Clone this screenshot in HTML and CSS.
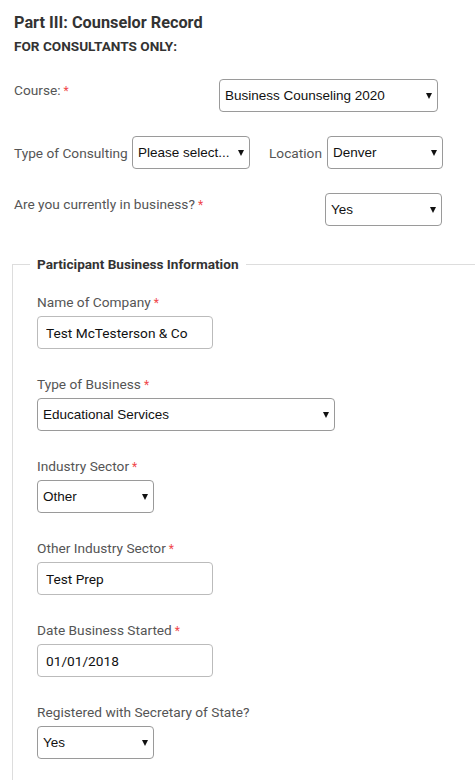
FILE: index.html
```html
<!DOCTYPE html>
<html>
<head>
<meta charset="utf-8">
<link rel="stylesheet" href="styles.css">
</head>
<body>
<div class="page">
  <h2 class="title">Part III: Counselor Record</h2>
  <div class="subtitle">FOR CONSULTANTS ONLY:</div>

  <div class="row row-top">
    <label class="lbl lbl-course">Course:<span class="req">*</span></label>
    <span class="sel sel-course"><select><option>Business Counseling 2020</option></select></span>
  </div>

  <div class="row row-mid">
    <label class="lbl lbl-type">Type of Consulting</label>
    <span class="sel sel-type"><select><option>Please select...</option></select></span>
    <label class="lbl lbl-loc">Location</label>
    <span class="sel sel-loc"><select><option>Denver</option></select></span>
  </div>

  <div class="row row-top">
    <label class="lbl lbl-biz">Are you currently in business?<span class="req">*</span></label>
    <span class="sel sel-biz"><select><option>Yes</option></select></span>
  </div>

  <fieldset class="box">
    <legend class="legend">Participant Business Information</legend>

    <div class="group">
      <label class="lbl">Name of Company<span class="req">*</span></label>
      <input class="inp" type="text" value="Test McTesterson &amp; Co">
    </div>

    <div class="group">
      <label class="lbl">Type of Business<span class="req">*</span></label>
      <span class="sel sel-wide"><select><option>Educational Services</option></select></span>
    </div>

    <div class="group">
      <label class="lbl">Industry Sector<span class="req">*</span></label>
      <span class="sel sel-small"><select><option>Other</option></select></span>
    </div>

    <div class="group">
      <label class="lbl">Other Industry Sector<span class="req">*</span></label>
      <input class="inp" type="text" value="Test Prep">
    </div>

    <div class="group">
      <label class="lbl">Date Business Started<span class="req">*</span></label>
      <input class="inp" type="text" value="01/01/2018">
    </div>

    <div class="group">
      <label class="lbl">Registered with Secretary of State?</label>
      <span class="sel sel-small"><select><option>Yes</option></select></span>
    </div>
  </fieldset>
</div>
</body>
</html>
```

FILE: styles.css
```css
html, body {
  margin: 0;
  padding: 0;
  background: #fff;
  overflow: hidden;
}

.page {
  padding: 12px 0 0 14px;
  font-family: Roboto, "Liberation Sans", sans-serif;
  color: #555;
}

.title {
  margin: 0;
  font-size: 16.3px;
  line-height: 22px;
  font-weight: 700;
  color: #333;
}

.subtitle {
  margin-top: 3px;
  font-size: 13.6px;
  line-height: 18px;
  font-weight: 700;
  color: #333;
}

.row {
  display: flex;
  margin-top: 24px;
}

.row-top {
  align-items: flex-start;
}

.row-mid {
  align-items: center;
}

.lbl {
  display: block;
  height: 18px;
  font-size: 13.7px;
  line-height: 18px;
  color: #555;
}

.row-top .lbl {
  padding-top: 2px;
}

.lbl-course {
  width: 205px;
}

.lbl-type {
  width: 114px;
}

.lbl-biz {
  width: 311px;
  padding-top: 3px;
}

.lbl-loc {
  margin-left: 19px;
  width: 53px;
}

.req {
  color: #f0474a;
  margin-left: 3px;
  font-size: 12px;
  line-height: 1;
}

.sel {
  position: relative;
  display: inline-block;
  height: 33px;
}

.sel select {
  -webkit-appearance: none;
  appearance: none;
  box-sizing: border-box;
  width: 100%;
  height: 33px;
  margin: 0;
  padding: 0 20px 0 5px;
  border: 1px solid #9a9a9a;
  border-radius: 4px;
  background: #fff;
  font-family: "Liberation Sans", Arial, sans-serif;
  font-size: 13.5px;
  color: #111;
}

.sel::after {
  content: "";
  position: absolute;
  right: 6px;
  top: 14px;
  border-left: 3.5px solid transparent;
  border-right: 3.5px solid transparent;
  border-top: 6px solid #111;
  pointer-events: none;
}

.sel-course { width: 219px; }
.sel-type { width: 118px; margin-left: 4px; }
.sel-loc { width: 116px; margin-left: 5px; }
.sel-biz { width: 117px; }
.sel-wide { width: 298px; }
.sel-small { width: 117px; }

.box {
  margin: 29px 0 0 -2px;
  padding: 20px 0 0 24px;
  border: 1px solid #ddd;
  border-right: none;
  border-bottom: none;
  min-height: 700px;
}

.legend {
  margin-left: -7px;
  padding: 0 7px;
  font-size: 13.6px;
  line-height: 18px;
  font-weight: 700;
  color: #333;
}

.group {
  display: flex;
  flex-direction: column;
  align-items: flex-start;
  margin-bottom: 26px;
}

.group .lbl {
  margin-bottom: 5px;
}

.inp {
  box-sizing: border-box;
  width: 176px;
  height: 33px;
  margin: 0;
  padding: 0 8px;
  border: 1px solid #bbb;
  border-radius: 4px;
  font-family: Roboto, "Liberation Sans", sans-serif;
  font-size: 13.7px;
  color: #111;
}
```
